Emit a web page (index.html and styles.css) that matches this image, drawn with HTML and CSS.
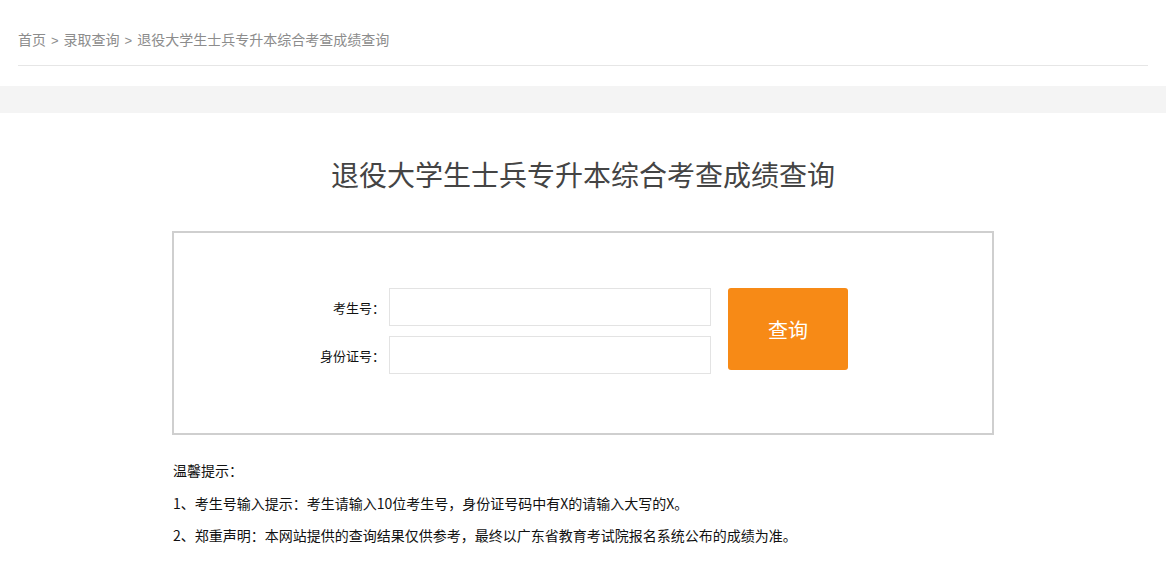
FILE: index.html
```html
<!DOCTYPE html>
<html lang="zh-CN">
<head>
<meta charset="utf-8">
<title>退役大学生士兵专升本综合考查成绩查询</title>
<link rel="stylesheet" href="styles.css">
</head>
<body>
<div class="crumbs">
  <a class="crumb" href="#">首页</a><span class="sep">&gt;</span><a class="crumb" href="#">录取查询</a><span class="sep">&gt;</span><span class="crumb">退役大学生士兵专升本综合考查成绩查询</span>
</div>
<div class="band"></div>
<h1 class="title">退役大学生士兵专升本综合考查成绩查询</h1>
<div class="panel">
  <form class="query">
    <div class="fields">
      <div class="row">
        <label class="label">考生号：</label>
        <input class="input" type="text">
      </div>
      <div class="row">
        <label class="label">身份证号：</label>
        <input class="input" type="text">
      </div>
    </div>
    <button class="btn" type="button">查询</button>
  </form>
</div>
<div class="notes">
  <p>温馨提示：</p>
  <p>1、考生号输入提示：考生请输入10位考生号，身份证号码中有X的请输入大写的X。</p>
  <p>2、郑重声明：本网站提供的查询结果仅供参考，最终以广东省教育考试院报名系统公布的成绩为准。</p>
</div>
</body>
</html>
```

FILE: styles.css
```css
html, body {
  margin: 0;
  padding: 0;
  background: #fff;
}
body {
  font-family: "Noto Sans CJK SC", "Noto Sans", sans-serif;
  color: #222;
}
.crumbs {
  margin: 0 18px;
  padding: 29px 0 14px;
  line-height: 20px;
  font-size: 14px;
  color: #8c8c8c;
  border-bottom: 1px solid #e6e6e6;
}
.crumb {
  color: #8c8c8c;
  text-decoration: none;
}
.sep {
  margin: 0 5px;
  font-family: "Liberation Sans", sans-serif;
  font-size: 13px;
}
.band {
  margin-top: 20px;
  height: 27px;
  background: #f4f4f4;
}
.title {
  margin: 41px 0 0;
  text-align: center;
  font-size: 28px;
  line-height: 40px;
  font-weight: normal;
  color: #444;
}
.panel {
  box-sizing: border-box;
  width: 822px;
  height: 204px;
  margin: 37px auto 0;
  border: 2px solid #cfcfcf;
  padding-top: 55px;
}
.query {
  display: flex;
  justify-content: center;
  align-items: flex-start;
  gap: 17px;
  margin: 0;
}
.fields {
  display: flex;
  flex-direction: column;
  gap: 10px;
}
.row {
  display: flex;
  align-items: center;
}
.label {
  box-sizing: border-box;
  width: 71px;
  padding-right: 4px;
  text-align: right;
  font-size: 13px;
  color: #111;
  white-space: nowrap;
}
.input {
  box-sizing: border-box;
  width: 322px;
  height: 38px;
  margin: 0;
  border: 1px solid #e3e3e3;
  background: #fff;
  outline: none;
}
.btn {
  width: 120px;
  height: 82px;
  border: none;
  border-radius: 3px;
  background: #f78a16;
  color: #fff;
  font-family: "Noto Sans CJK SC", sans-serif;
  font-size: 20px;
  cursor: pointer;
}
.notes {
  width: 822px;
  margin: 19px auto 0;
  padding-left: 1px;
  box-sizing: border-box;
  font-size: 14px;
  color: #111;
}
.notes p {
  margin: 0;
  line-height: 32.5px;
}
```
